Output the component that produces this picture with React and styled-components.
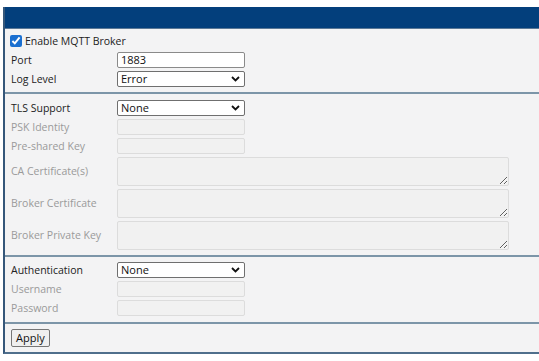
import React from 'react';
import styled, { createGlobalStyle } from 'styled-components';

const GlobalStyle = createGlobalStyle`
  html, body {
    margin: 0;
    padding: 0;
    background: #ffffff;
    overflow: hidden;
  }
  body {
    font-family: "Open Sans", "Liberation Sans", sans-serif;
  }
`;

const Page = styled.div`
  padding: 7px 0 0 3px;
  width: 580px;
`;

const Panel = styled.div`
  background: #f3f3f4;
  border-left: 2px solid #35577a;
  border-bottom: 2px solid #4f6f8c;
`;

const Header = styled.div`
  height: 21px;
  background: #033f7c;
  border-bottom: 1px solid #5b7896;
`;

const Section = styled.div`
  padding: ${p => p.$pad};
  border-top: ${p => (p.$first ? 'none' : '2px solid #7c95a8')};
`;

const Row = styled.div`
  display: grid;
  grid-template-columns: 106px 1fr;
  align-items: center;
  height: ${p => p.$h || 19}px;
`;

const Label = styled.span`
  font-size: 10.5px;
  line-height: 14px;
  color: ${p => (p.$disabled ? '#9a9a9a' : '#222222')};
  white-space: nowrap;
`;

const CheckLabel = styled.label`
  grid-column: 1 / -1;
  display: flex;
  align-items: center;
  gap: 3px;
  font-size: 10.5px;
  line-height: 14px;
  color: #222222;
  white-space: nowrap;
  margin-left: -1px;
`;

const Check = styled.input`
  width: 12px;
  height: 12px;
  margin: 0;
  accent-color: #1a6fd0;
`;

const Field = styled.input`
  display: block;
  box-sizing: border-box;
  width: 128px;
  height: 16px;
  margin: 0;
  padding: 0 3px;
  font-family: "Open Sans", "Liberation Sans", sans-serif;
  font-size: 11px;
  line-height: 14px;
  color: #111111;
  background: ${p => (p.disabled ? '#f1f1f1' : '#ffffff')};
  border: 1px solid ${p => (p.disabled ? '#dcdcdc' : '#8a8a8a')};
  border-radius: 2px;
  outline: none;
`;

const SelectWrap = styled.div`
  position: relative;
  width: 128px;
  height: 16px;
`;

const Select = styled.select`
  display: block;
  appearance: none;
  box-sizing: border-box;
  width: 100%;
  height: 16px;
  margin: 0;
  padding: 0 3px;
  font-family: "Open Sans", "Liberation Sans", sans-serif;
  font-size: 11px;
  line-height: 14px;
  color: #111111;
  background: #ffffff;
  border: 1px solid #6f6f6f;
  border-radius: 2px;
  outline: none;
`;

const Chevron = styled.svg`
  position: absolute;
  right: 5px;
  top: 5px;
  pointer-events: none;
`;

const Area = styled.textarea`
  box-sizing: border-box;
  width: 392px;
  height: 29px;
  margin: 0;
  display: block;
  background: #f1f1f1;
  border: 1px solid #dcdcdc;
  border-radius: 2px;
  resize: both;
`;

const Button = styled.button`
  display: block;
  box-sizing: border-box;
  height: 18px;
  padding: 0 4px;
  margin-left: 0;
  font-family: "Open Sans", "Liberation Sans", sans-serif;
  font-size: 11px;
  line-height: 14px;
  color: #111111;
  background: #efefef;
  border: 1px solid #767676;
  border-radius: 2px;
`;

function Dropdown({ value }) {
  return (
    <SelectWrap>
      <Select defaultValue={value}>
        <option>{value}</option>
      </Select>
      <Chevron width="9" height="6" viewBox="0 0 9 6">
        <path d="M1 1l3.5 3.5L8 1" fill="none" stroke="#111" strokeWidth="1.8" />
      </Chevron>
    </SelectWrap>
  );
}

export default function App() {
  return (
    <Page>
      <GlobalStyle />
      <Panel>
        <Header />
        <Section $first $pad="2px 0 4px 6px">
          <Row>
            <CheckLabel>
              <Check type="checkbox" defaultChecked />
              Enable MQTT Broker
            </CheckLabel>
          </Row>
          <Row>
            <Label>Port</Label>
            <Field defaultValue="1883" />
          </Row>
          <Row>
            <Label>Log Level</Label>
            <Dropdown value="Error" />
          </Row>
        </Section>
        <Section $pad="4px 0 4px 6px">
          <Row>
            <Label>TLS Support</Label>
            <Dropdown value="None" />
          </Row>
          <Row>
            <Label $disabled>PSK Identity</Label>
            <Field disabled />
          </Row>
          <Row>
            <Label $disabled>Pre-shared Key</Label>
            <Field disabled />
          </Row>
          <Row $h={32}>
            <Label $disabled>CA Certificate(s)</Label>
            <Area disabled />
          </Row>
          <Row $h={32}>
            <Label $disabled>Broker Certificate</Label>
            <Area disabled />
          </Row>
          <Row $h={32}>
            <Label $disabled>Broker Private Key</Label>
            <Area disabled />
          </Row>
        </Section>
        <Section $pad="3px 0 5px 6px">
          <Row>
            <Label>Authentication</Label>
            <Dropdown value="None" />
          </Row>
          <Row>
            <Label $disabled>Username</Label>
            <Field disabled />
          </Row>
          <Row>
            <Label $disabled>Password</Label>
            <Field type="password" disabled />
          </Row>
        </Section>
        <Section $pad="5px 0 5px 6px">
          <Button>Apply</Button>
        </Section>
      </Panel>
    </Page>
  );
}
